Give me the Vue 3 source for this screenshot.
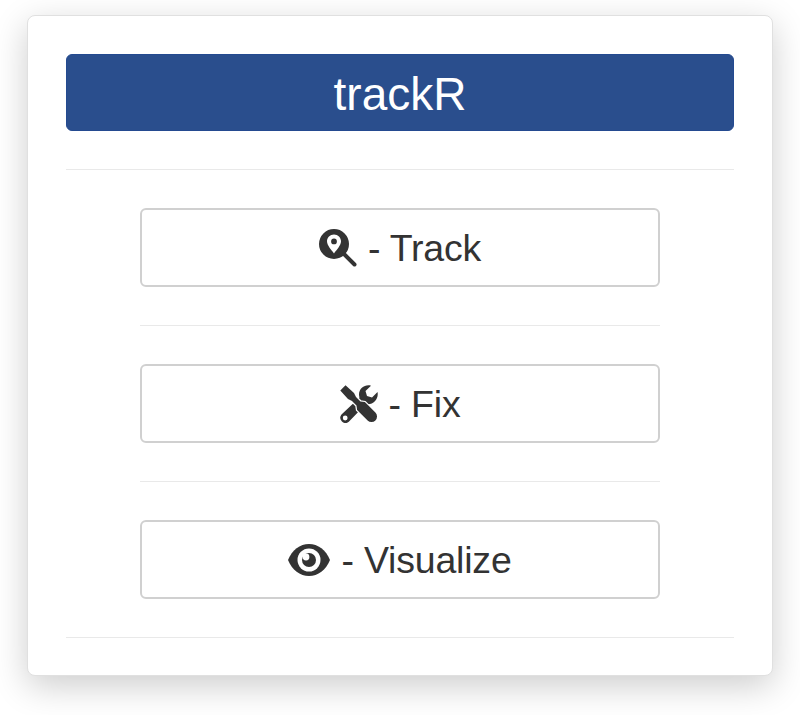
<script setup>
const actions = [
  { label: 'Track', icon: 'track' },
  { label: 'Fix', icon: 'fix' },
  { label: 'Visualize', icon: 'eye' }
];
</script>

<template>
  <div class="page">
    <div class="panel">
      <div class="title">trackR</div>
      <hr class="rule" />
      <div class="actions">
        <template v-for="action in actions" :key="action.label">
          <button class="action" type="button">
            <svg v-if="action.icon === 'track'" class="icon" width="38" height="38" viewBox="0 0 38 38">
              <path fill-rule="evenodd" d="M15 0a15 15 0 1 1 0 30a15 15 0 0 1 0-30ZM15 5.500c-4 0-7 3-7 6.800c0 4.200 4.600 8.800 7 12.200c2.400-3.400 7-8 7-12.200c0-3.800-3-6.800-7-6.800ZM15 9.500a2.900 2.900 0 1 1 0 5.800a2.900 2.900 0 0 1 0-5.800Z" fill="#333" />
              <path d="M25.500 25.500l10 10" stroke="#333" stroke-width="4" stroke-linecap="round" fill="none" />
            </svg>
            <svg v-else-if="action.icon === 'fix'" class="icon" width="38" height="38" viewBox="0 0 38 38">
              <path fill-rule="evenodd" d="M37.500 7L32 12.500L27 11L25.500 6L31 .7C25.500-1 19 3 19 9.500C19 10.500 19.200 11.500 19.500 12.500L1.500 29.500A5.200 5.200 0 0 0 8.800 36.800L26 19C33 20.500 39 14 37.500 7ZM5.200 30.600a2.400 2.400 0 1 1 0 4.800a2.400 2.400 0 0 1 0-4.800Z" fill="#333" />
              <path class="driver" d="M.3 5.500L5.500 .3L14 8L16 12L20.500 16.500L24.900 17.100L35.400 27.600A5.500 5.500 0 0 1 27.600 35.400L17.100 24.900L16.500 20.500L12 16L8 14Z" />
            </svg>
            <svg v-else class="icon" width="42" height="32" viewBox="0 0 42 32">
              <path d="M0 16C4 6 12 0 21 0C30 0 38 6 42 16C38 26 30 32 21 32C12 32 4 26 0 16Z" fill="#333" />
              <circle cx="21" cy="16" r="11.500" fill="#fff" />
              <circle cx="21" cy="16" r="7" fill="#333" />
              <circle cx="18" cy="13" r="3.400" fill="#fff" />
            </svg>
            <span class="label">- {{ action.label }}</span>
          </button>
          <hr class="rule" />
        </template>
      </div>
    </div>
  </div>
</template>

<style scoped>
.page {
  width: 800px;
  height: 715px;
  padding: 15px 27px 0;
  box-sizing: border-box;
  font-family: "Liberation Sans", Arial, sans-serif;
}

.panel {
  height: 661px;
  box-sizing: border-box;
  padding: 38px 38px 0;
  background: #fff;
  border: 1px solid #e0e0e0;
  border-radius: 8px;
  box-shadow: 0 10px 35px rgba(0, 0, 0, 0.2);
}

.title {
  height: 77px;
  box-sizing: border-box;
  padding-top: 3px;
  display: flex;
  align-items: center;
  justify-content: center;
  background: #2a4e8d;
  border: 1px solid #244a90;
  border-radius: 6px;
  color: #fff;
  font-size: 46px;
}

.rule {
  height: 1px;
  margin: 38px 0;
  border: 0;
  background: #e9e9e9;
}

.actions {
  display: flex;
  flex-direction: column;
  align-items: center;
}

.actions .rule {
  width: 520px;
}

.actions .rule:last-child {
  width: 668px;
}

.action {
  width: 520px;
  height: 79px;
  display: flex;
  align-items: center;
  justify-content: center;
  gap: 11px;
  padding: 0;
  background: #fff;
  border: 2px solid #d0d0d0;
  border-radius: 6px;
  color: #333;
  font-family: inherit;
  font-size: 37.5px;
  letter-spacing: -0.2px;
}

.label {
  padding-top: 2px;
}

.driver {
  fill: #333;
  stroke: #fff;
  stroke-width: 2.5;
  paint-order: stroke;
}
</style>
